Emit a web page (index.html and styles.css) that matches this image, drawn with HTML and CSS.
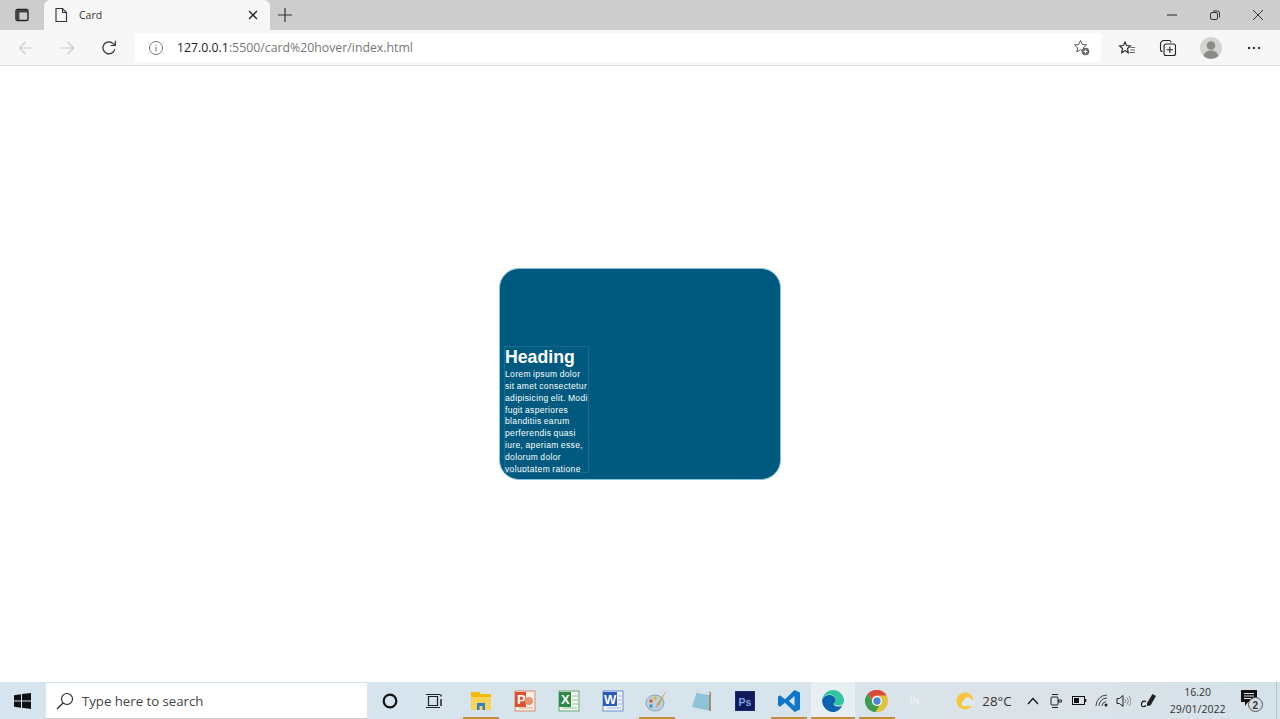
FILE: index.html
```html
<!DOCTYPE html>
<html lang="en">
<head>
<meta charset="utf-8">
<title>Card</title>
<link rel="stylesheet" href="styles.css">
</head>
<body>
<div class="tabstrip">
  <div class="tabside"><svg width="16" height="16" viewBox="0 0 16 16"><rect x="2" y="2.500" width="12" height="11" rx="1.500" fill="none" stroke="#222" stroke-width="1.400"/><path d="M2 3h12v2.600H2zM2 3h3.400v10H2z" fill="#444"/></svg></div>
  <div class="tab">
    <svg width="14" height="16" viewBox="0 0 14 16"><path d="M2 1.500h6.500L12.500 5.500v9h-10.500z M8.500 1.500v4h4" fill="none" stroke="#333" stroke-width="1.100"/></svg>
    <span class="tabtitle">Card</span>
    <svg width="10" height="10" viewBox="0 0 10 10"><path d="M1 1l8 8M9 1l-8 8" stroke="#222" stroke-width="1.300"/></svg>
  </div>
  <svg class="plus" width="14" height="14" viewBox="0 0 14 14"><path d="M7 0v14M0 7h14" stroke="#333" stroke-width="1.200"/></svg>
  <div class="winbtns">
    <svg width="10" height="10" viewBox="0 0 10 10"><path d="M0 5h10" stroke="#333" stroke-width="1.100"/></svg>
    <svg width="10" height="10" viewBox="0 0 10 10"><rect x="0.500" y="2.500" width="7" height="7" rx="1.500" fill="none" stroke="#333"/><path d="M3 1h4.500a2 2 0 0 1 2 2v4.500" fill="none" stroke="#333"/></svg>
    <svg width="10" height="10" viewBox="0 0 10 10"><path d="M0 0l10 10M10 0l-10 10" stroke="#333" stroke-width="1"/></svg>
  </div>
</div>
<div class="toolbar">
  <svg class="back" width="16" height="14" viewBox="0 0 16 14"><path d="M15 7H1.500M7.500 1l-6 6 6 6" fill="none" stroke="#c9c9c9" stroke-width="1.200"/></svg>
  <svg class="fwd" width="16" height="14" viewBox="0 0 16 14"><path d="M1 7h13.500M8.500 1l6 6-6 6" fill="none" stroke="#c9c9c9" stroke-width="1.200"/></svg>
  <svg class="reload" width="16" height="16" viewBox="0 0 16 16"><path d="M13.800 9a6 6 0 1 1-1.600-5.400L14 5.300" fill="none" stroke="#333" stroke-width="1.200"/><path d="M14.300 0.800v4.700H9.600" fill="none" stroke="#333" stroke-width="1.200"/></svg>
  <div class="address">
    <svg width="16" height="16" viewBox="0 0 16 16"><circle cx="8" cy="8" r="6.500" fill="none" stroke="#777"/><path d="M8 7v4.500M8 4.500v1.200" stroke="#777"/></svg>
    <span class="url"><span class="host">127.0.0.1</span>:5500/card%20hover/index.html</span>
    <svg class="favadd" width="17" height="17" viewBox="0 0 17 17"><path d="M7.500 1.500l1.800 4 4.200.4-3.200 2.800.9 4.200-3.700-2.200-3.700 2.200.9-4.200-3.200-2.800 4.200-.4z" fill="none" stroke="#555"/><circle cx="12.500" cy="12.500" r="3.800" fill="#666"/><path d="M12.500 10.500v4M10.500 12.500h4" stroke="#fff"/></svg>
  </div>
  <div class="tools">
    <svg width="18" height="16" viewBox="0 0 18 16"><path d="M7 2l1.600 3.600 3.800.4-2.900 2.500.8 4.300L7 10.600l-3.300 2.200.8-4.300L1.600 6l3.800-.4z" fill="none" stroke="#222" stroke-width="1.100"/><path d="M12.500 7.500h4.500M12.500 10h4.500M11.500 12.500h5.500" stroke="#666"/></svg>
    <svg width="18" height="18" viewBox="0 0 18 18"><rect x="5" y="5" width="11.500" height="11.500" rx="2" fill="none" stroke="#222" stroke-width="1.100"/><path d="M3.500 12.500a2 2 0 0 1-2-2V5a3.500 3.500 0 0 1 3.500-3.500h5a2 2 0 0 1 2 2" fill="none" stroke="#222" stroke-width="1.100"/><path d="M10.800 7.500v6.500M7.500 10.800H14" stroke="#222" stroke-width="1.100"/></svg>
    <svg width="22" height="22" viewBox="0 0 22 22"><circle cx="11" cy="11" r="11" fill="#d6d4d2"/><circle cx="11" cy="8.500" r="4.300" fill="#8d8b89"/><path d="M3.500 19c1-4 4-5.500 7.500-5.500s6.500 1.500 7.500 5.500a11 11 0 0 1-15 0z" fill="#8d8b89"/></svg>
    <svg width="14" height="4" viewBox="0 0 14 4"><circle cx="2" cy="2" r="1.200" fill="#333"/><circle cx="7" cy="2" r="1.200" fill="#333"/><circle cx="12" cy="2" r="1.200" fill="#333"/></svg>
  </div>
</div>
<main class="page">
  <div class="card">
    <div class="content">
      <h2 class="heading">Heading</h2>
      <p class="para">Lorem ipsum dolor sit amet consectetur adipisicing elit. Modi fugit asperiores blanditiis earum perferendis quasi iure, aperiam esse, dolorum dolor voluptatem ratione</p>
    </div>
  </div>
</main>
<footer class="taskbar">
  <svg class="start" width="17" height="16" viewBox="0 0 17 16"><path d="M0 2.300l7-1v6.300H0zM8 1.100l9-1.100v7.600H8zM0 8.500h7v6.300l-7-1zM8 8.500h9V16l-9-1.200z" fill="#111"/></svg>
  <div class="search">
    <svg width="18" height="18" viewBox="0 0 18 18"><circle cx="11" cy="7" r="5.500" fill="none" stroke="#222" stroke-width="1.100"/><path d="M7 11l-6 6" stroke="#222" stroke-width="1.200"/></svg>
    <span>Type here to search</span>
  </div>
  <div class="apps">
    <div class="app"><svg width="16" height="16" viewBox="0 0 16 16"><circle cx="8" cy="8" r="6.300" fill="none" stroke="#111" stroke-width="2.200"/></svg></div>
    <div class="app"><svg width="18" height="16" viewBox="0 0 18 16"><path d="M3.500 3.500h9v9h-9zM1 1.500h14M1 14.500h14" fill="none" stroke="#222" stroke-width="1.200"/><path d="M16 1.500v2M16 6v7" stroke="#222" stroke-width="1.500"/></svg></div>
    <div class="app on explorer"><svg width="22" height="20" viewBox="0 0 22 20"><path d="M1 1h8l2 2h10v5H1z" fill="#f2b90f"/><path d="M1 6h20v13H1z" fill="#fbd25b"/><path d="M7 12h8v7h-2.500v-4h-3v4H7z" fill="#2f7fc1"/></svg></div>
    <div class="app"><svg width="22" height="22" viewBox="0 0 22 22"><rect x="1" y="1" width="20" height="20" fill="#f8efe8" stroke="#d98a6a"/><path d="M1 2h11v15H1z" fill="#d9532c"/><text x="3" y="14" class="logo-t">P</text><circle cx="15" cy="11" r="4" fill="#e8927a"/><path d="M5 18h14" stroke="#e0a58f"/></svg></div>
    <div class="app"><svg width="22" height="22" viewBox="0 0 22 22"><rect x="1" y="1" width="20" height="20" fill="#eef5ec" stroke="#6fa877"/><path d="M1 2h12v15H1z" fill="#2f8a47"/><text x="3" y="14" class="logo-t">X</text><path d="M14 6h6M14 10h6M14 14h6M5 18h14" stroke="#9cc4a2"/></svg></div>
    <div class="app"><svg width="22" height="22" viewBox="0 0 22 22"><rect x="1" y="1" width="20" height="20" fill="#eef2fa" stroke="#6f8fd0"/><path d="M1 2h14v14H1z" fill="#2b5cb8"/><text x="2" y="14" class="logo-t">W</text><path d="M16 6h4M16 10h4M16 14h4M5 18h14" stroke="#a3b7dd"/></svg></div>
    <div class="app on"><svg width="24" height="24" viewBox="0 0 24 24"><ellipse cx="10" cy="14" rx="9" ry="8" fill="#bcd0dd" stroke="#8aa3b3"/><circle cx="6" cy="12" r="1.700" fill="#d8562c"/><circle cx="10" cy="9" r="1.700" fill="#e2b32e"/><circle cx="6" cy="17" r="1.700" fill="#3b8fc9"/><path d="M22 1l-8 15-3 3 1-4z" fill="#cf9a4c"/></svg></div>
    <div class="app"><svg width="22" height="24" viewBox="0 0 22 24"><path d="M7 2l14 2v18L2 18z" fill="#8fc4d8"/><path d="M19 3h2v19h-2z" fill="#9a9078"/><path d="M7 2l13 2-1 2-12-2z" fill="#dfe5e5"/></svg></div>
    <div class="app"><svg width="20" height="20" viewBox="0 0 20 20"><rect width="20" height="20" fill="#1b2a78"/><rect x="1" y="1" width="18" height="18" fill="#10195a"/><text x="3.500" y="14.500" class="logo-ps">Ps</text></svg></div>
    <div class="app on"><svg width="24" height="24" viewBox="0 0 24 24"><path d="M17.500 1L23 3.500v17L17.500 23 8 13.800 3 17.800 1 16.500v-9L3 6.200l5 4zM17.500 7l-5.500 5 5.500 5z" fill="#0f78c8" fill-rule="evenodd"/></svg></div>
    <div class="app active"><svg width="24" height="24" viewBox="0 0 24 24"><path d="M12 1a11 11 0 0 1 11 11c0 3-2.500 4.500-5.500 4.500-2.500 0-5-.8-5-2.500 0-1 2-1 2-3.500 0-3-3-5-6-5-3.500 0-6 2-7.300 4.500C2.500 5 6.500 1 12 1z" fill="#2fc5a0"/><path d="M1.200 10.500C3 7 6 6 8.500 6c3 0 6 2 6 5 0 2.500-2 2.500-2 3.500 0 3.500 6.500 4 9 1.500-2 4.500-5.500 7-9.500 7C6 23 .5 17 1.200 10.500z" fill="#0b62b0"/></svg></div>
    <div class="app on"><svg width="24" height="24" viewBox="0 0 24 24"><circle cx="12" cy="12" r="11" fill="#e2c13a"/><path d="M12 1a11 11 0 0 1 9.500 5.500H12a5.500 5.500 0 0 0-5.300 4L3 4.500A11 11 0 0 1 12 1z" fill="#d94a3c"/><path d="M3 4.500l5 9a5.500 5.500 0 0 0 6 3.300L10.500 23A11 11 0 0 1 3 4.500z" fill="#3e9b50"/><circle cx="12" cy="12" r="5" fill="#fff"/><circle cx="12" cy="12" r="3.700" fill="#4a86d8"/></svg></div>
  </div>
  <span class="lang">IN</span>
  <div class="weather">
    <svg width="20" height="20" viewBox="0 0 20 20"><circle cx="9" cy="10" r="8.500" fill="#f7c53c"/><path d="M7 15a3 3 0 0 1 1-5.500 4 4 0 0 1 7.500-1 3.500 3.500 0 0 1 1.500 6.500z" fill="#dfe9f0"/></svg>
    <span>28°C</span>
  </div>
  <div class="tray">
    <svg width="12" height="8" viewBox="0 0 12 8"><path d="M1 7l5-5.500L11 7" fill="none" stroke="#111" stroke-width="1.200"/></svg>
    <svg class="cam" width="13" height="16" viewBox="0 0 13 16"><rect x="1" y="4" width="7" height="8" rx="1" fill="none" stroke="#222"/><path d="M8.500 7h3v2h-3zM2 1.500h6M2 14.500h6" fill="none" stroke="#222"/></svg>
    <svg width="15" height="9" viewBox="0 0 15 9"><rect x="0.500" y="0.500" width="12" height="8" fill="none" stroke="#111"/><rect x="2" y="2" width="5" height="5" fill="#111"/><path d="M13.500 3v3" stroke="#111" stroke-width="1.500"/></svg>
    <svg class="wifi" width="14" height="13" viewBox="0 0 14 13"><path d="M1 12a11 11 0 0 1 11-11M4 12a8 8 0 0 1 8-8M7 12a5 5 0 0 1 4-4.500" fill="none" stroke="#333" stroke-width="0.900"/><circle cx="11" cy="11" r="1.500" fill="#222"/></svg>
    <svg class="vol" width="15" height="14" viewBox="0 0 15 14"><path d="M1 4.500h2.500L7 1.500v11l-3.500-3H1z" fill="none" stroke="#222"/><path d="M9 5a3 3 0 0 1 0 4M11 3.500a5.500 5.500 0 0 1 0 7M13 2a8 8 0 0 1 0 10" fill="none" stroke="#777" stroke-width="0.800"/></svg>
    <svg class="pen" width="18" height="18" viewBox="0 0 18 18"><path d="M7 11l5.500-9 3.500 2-5.500 9.500-3.500.5z" fill="#222"/><path d="M6 9.500c-3-1-5 1-4.500 3.500s3 2 4.500.5" fill="none" stroke="#111" stroke-width="1.200"/></svg>
  </div>
  <div class="clock"><span>16.20</span><span>29/01/2022</span></div>
  <div class="notif">
    <svg width="24" height="24" viewBox="0 0 24 24"><path d="M1 1h16v12H8l-3 4v-4H1z" fill="#111"/><path d="M4 4.500h10M4 7h10M4 9.500h7" stroke="#d7e4ec"/><circle cx="15.500" cy="15.500" r="7" fill="#d3dde3" stroke="#555"/><text x="12.500" y="19.500" class="notif-n">2</text></svg>
  </div>
  <div class="peek"></div>
</footer>
</body>
</html>
```

FILE: styles.css
```css
* { box-sizing: border-box; }
html, body { margin: 0; height: 719px; overflow: hidden; }
body {
  display: flex;
  flex-direction: column;
  font-family: "Open Sans", "Liberation Sans", sans-serif;
  background: #fff;
}
svg { flex: none; display: block; }

.tabstrip {
  height: 30px;
  flex: none;
  display: flex;
  align-items: center;
  background: #cdcdcd;
}
.tabside { width: 44px; display: flex; justify-content: center; }
.tab {
  width: 226px;
  height: 30px;
  display: flex;
  align-items: center;
  padding: 0 12px 0 10px;
  background: #f7f7f7;
  border-radius: 6px 6px 0 0;
  align-self: flex-end;
}
.tabtitle { flex: 1; margin-left: 11px; font-size: 10.500px; color: #333; }
.plus { margin-left: 8px; }
.winbtns { margin-left: auto; display: flex; align-items: center; gap: 33px; padding-right: 17px; }

.toolbar {
  height: 36px;
  flex: none;
  display: flex;
  align-items: center;
  background: #f7f7f7;
  border-bottom: 1px solid #dcdcdc;
}
.back { margin-left: 18px; }
.fwd { margin-left: 25px; }
.reload { margin-left: 26px; }
.address {
  margin-left: 18px;
  width: 966px;
  height: 29px;
  display: flex;
  align-items: center;
  padding: 0 11px 0 13px;
  background: #fff;
  border-radius: 4px;
}
.url { margin-left: 13px; font-size: 12.300px; color: #777; flex: 1; white-space: nowrap; }
.host { color: #222; }
.tools { display: flex; align-items: center; margin-left: 17px; }
.tools svg:nth-child(1) { margin-right: 23px; }
.tools svg:nth-child(2) { margin-right: 23px; }
.tools svg:nth-child(3) { margin-right: 25px; }

.page {
  flex: 1;
  display: flex;
  align-items: flex-start;
  justify-content: center;
  padding-top: 202px;
  background: #fff;
}
.card {
  width: 282px;
  height: 212px;
  display: flex;
  align-items: flex-end;
  padding: 0 0 6px 4px;
  background: #005a80;
  border: 1px solid #8cc3dc;
  border-radius: 20px;
}
.content {
  width: 85px;
  height: 127px;
  overflow: hidden;
  border: 1px solid #1d6a8c;
  color: #fff;
  font-family: "Liberation Sans", Arial, sans-serif;
}
.heading { margin: 0; font-size: 17.700px; line-height: 21px; font-weight: 700; }
.para {
  margin: 0;
  padding-top: 1px;
  font-size: 8.500px;
  line-height: 11.850px;
  letter-spacing: 0.350px;
  word-spacing: -0.500px;
  width: 84px;
}

.taskbar {
  height: 37px;
  flex: none;
  display: flex;
  align-items: center;
  background: linear-gradient(90deg, #d5e4ee 0%, #d7e4ec 60%, #dbe3e8 78%, #d5e2ea 100%);
}
.start { margin-left: 14px; }
.search {
  margin-left: 15px;
  width: 321px;
  height: 36px;
  margin-top: 1px;
  display: flex;
  align-items: center;
  gap: 8px;
  padding-left: 10px;
  background: #fff;
  font-size: 13.200px;
  color: #444;
  border-bottom: 1px solid #c9c9c9;
}
.apps { display: flex; margin-left: 1px; height: 37px; }
.app {
  width: 44px;
  height: 37px;
  flex: none;
  display: flex;
  align-items: center;
  justify-content: center;
}
.explorer { margin-left: 3px; }
.app.on {
  background: linear-gradient(#c98a3c, #c98a3c) center bottom / 36px 2px no-repeat;
}
.app.active {
  background: linear-gradient(#c98a3c, #c98a3c) center bottom / 100% 2px no-repeat, #e8eff3;
}
.logo-t { font: 700 13px "Liberation Sans", sans-serif; fill: #fff; }
.logo-ps { font: 700 10.500px "Liberation Sans", sans-serif; fill: #7fa7e0; }
.notif-n { font: 700 10px "Liberation Sans", sans-serif; fill: #333; }
.lang { margin-left: 11px; font-size: 9px; color: #f1f5f7; }
.weather {
  margin-left: 37px;
  display: flex;
  align-items: center;
  gap: 6px;
  font-size: 13.300px;
  color: #333;
}
.tray { margin-left: 15px; display: flex; align-items: center; gap: 9px; }
.cam { margin-left: 2px; }
.wifi { margin-left: -1px; }
.vol { margin-left: -2px; }
.pen { margin-left: 0; }
.clock {
  margin-left: 9px;
  width: 62px;
  display: flex;
  flex-direction: column;
  align-items: center;
  font-size: 10.500px;
  line-height: 17px;
  color: #333;
}
.notif { margin-left: 11px; }
.peek { margin-left: auto; width: 4px; height: 37px; border-left: 1px solid #b8c5cd; }
```
